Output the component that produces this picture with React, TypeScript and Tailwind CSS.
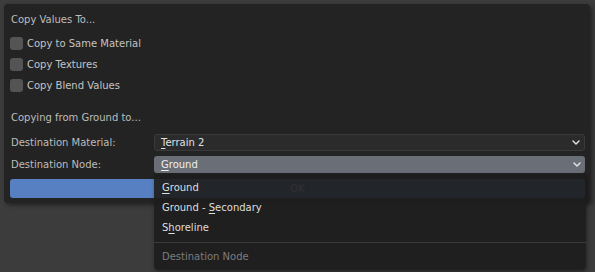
import React from 'react';

const Chevron = () => (
  <svg width="8" height="5" viewBox="0 0 8 5" className="shrink-0">
    <path d="M1 1 L4 4 L7 1" fill="none" stroke="#e6e6e6" strokeWidth="1.4" strokeLinecap="round" strokeLinejoin="round" />
  </svg>
);

const CheckRow = ({ label }: { label: string }) => (
  <div className="h-[21px] flex items-center gap-[4px]">
    <span className="w-[13px] h-[13px] rounded-[3px] bg-[#545454]" />
    <span className="text-[#c4c4c4]">{label}</span>
  </div>
);

const MENU_ITEMS: { pre: string; key: string; post: string }[] = [
  { pre: '', key: 'G', post: 'round' },
  { pre: 'Ground - ', key: 'S', post: 'econdary' },
  { pre: 'S', key: 'h', post: 'oreline' },
];

export default function App() {
  return (
    <div className="relative w-[595px] h-[272px] overflow-hidden bg-[#3c3c3c] pt-[4px] pl-[4px] font-['DejaVu_Sans',sans-serif] text-[10px] leading-none">
      {/* dialog panel */}
      <div className="w-[586px] h-[199px] rounded-[4px] bg-[#232323] shadow-[2px_2px_4px_rgba(0,0,0,0.45)] pt-[6px] pl-[6px] pr-[5px] flex flex-col">
        <div className="h-[20px] flex items-center pl-[1px] text-[#bdbdbd]">Copy Values To...</div>
        <div className="mt-[3px] flex flex-col">
          <CheckRow label="Copy to Same Material" />
          <CheckRow label="Copy Textures" />
          <CheckRow label="Copy Blend Values" />
        </div>
        <div className="mt-[12px] h-[20px] flex items-center pl-[1px] text-[#bdbdbd]">Copying from Ground to...</div>

        <div className="mt-[6px] h-[17px] flex items-center">
          <span className="w-[144px] pl-[1px] text-[#bdbdbd]">Destination Material:</span>
          <div className="flex-1 h-full rounded-[3px] border border-[#3a3a3a] bg-[#2b2b2b] flex items-center justify-between pl-[6px] pr-[4px] text-[#e2e2e2]">
            <span>
              <u className="underline-offset-2">T</u>errain 2
            </span>
            <Chevron />
          </div>
        </div>

        <div className="mt-[5px] h-[17px] flex items-center">
          <span className="w-[144px] pl-[1px] text-[#bdbdbd]">Destination Node:</span>
          <div className="flex-1 h-full rounded-[3px] bg-[#6a6e76] flex items-center justify-between pl-[7px] pr-[4px] text-[#f0f0f0]">
            <span>
              <u className="underline-offset-2">G</u>round
            </span>
            <Chevron />
          </div>
        </div>

        <div className="mt-[6px] h-[19px] rounded-[3px] bg-[#5680c2] flex items-center justify-center text-white">OK</div>
      </div>

      {/* open dropdown menu */}
      <div className="absolute left-[154px] top-[174px] w-[432px] h-[96px] rounded-b-[4px] bg-[#1d1d1d]/[0.92] shadow-[1px_2px_4px_rgba(0,0,0,0.4)] pt-[4px] flex flex-col">
        {MENU_ITEMS.map((it) => (
          <div key={it.pre + it.key} className="h-[20px] flex items-center pl-[8px] text-[#dedede]">
            <span className="whitespace-pre">
              {it.pre}
              <u className="underline-offset-2">{it.key}</u>
              {it.post}
            </span>
          </div>
        ))}
        <div className="mt-[4px] border-t border-[#3a3a3a]" />
        <div className="flex-1 flex items-center pl-[8px] text-[#7d7d7d]">Destination Node</div>
      </div>
    </div>
  );
}
